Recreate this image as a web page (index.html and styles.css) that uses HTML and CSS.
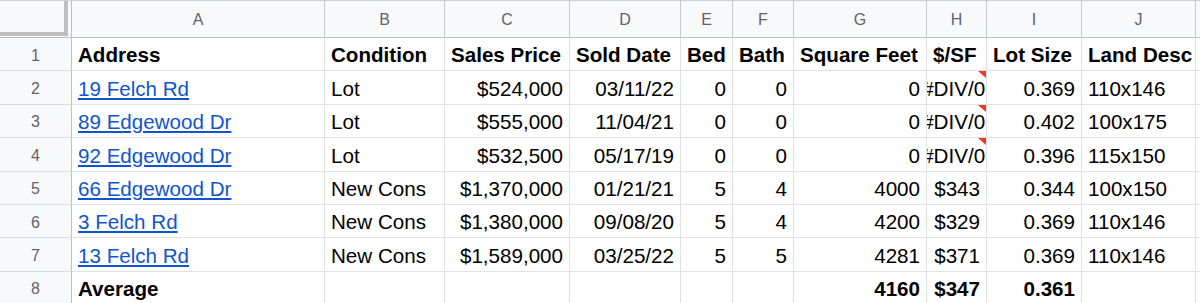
FILE: index.html
```html
<!DOCTYPE html>
<html>
<head>
<meta charset="utf-8">
<link rel="stylesheet" href="styles.css">
</head>
<body>
<div class="sheet">
  <div class="corner"><div class="freeze"></div></div>
  <div class="ch">A</div><div class="ch">B</div><div class="ch">C</div><div class="ch">D</div><div class="ch">E</div><div class="ch">F</div><div class="ch">G</div><div class="ch">H</div><div class="ch">I</div><div class="ch">J</div><div class="ch"></div>

  <div class="rh">1</div>
  <div class="c b">Address</div><div class="c b">Condition</div><div class="c b">Sales Price</div><div class="c b">Sold Date</div><div class="c b">Bed</div><div class="c b">Bath</div><div class="c b">Square Feet</div><div class="c b">$/SF</div><div class="c b">Lot Size</div><div class="c b">Land Desc</div><div class="c"></div>

  <div class="rh">2</div>
  <div class="c"><a class="lnk">19 Felch Rd</a></div><div class="c">Lot</div><div class="c r">$524,000</div><div class="c r">03/11/22</div><div class="c r">0</div><div class="c r">0</div><div class="c r">0</div><div class="c err">#DIV/0!</div><div class="c r">0.369</div><div class="c">110x146</div><div class="c"></div>

  <div class="rh">3</div>
  <div class="c"><a class="lnk">89 Edgewood Dr</a></div><div class="c">Lot</div><div class="c r">$555,000</div><div class="c r">11/04/21</div><div class="c r">0</div><div class="c r">0</div><div class="c r">0</div><div class="c err">#DIV/0!</div><div class="c r">0.402</div><div class="c">100x175</div><div class="c"></div>

  <div class="rh">4</div>
  <div class="c"><a class="lnk">92 Edgewood Dr</a></div><div class="c">Lot</div><div class="c r">$532,500</div><div class="c r">05/17/19</div><div class="c r">0</div><div class="c r">0</div><div class="c r">0</div><div class="c err">#DIV/0!</div><div class="c r">0.396</div><div class="c">115x150</div><div class="c"></div>

  <div class="rh">5</div>
  <div class="c"><a class="lnk">66 Edgewood Dr</a></div><div class="c">New Cons</div><div class="c r">$1,370,000</div><div class="c r">01/21/21</div><div class="c r">5</div><div class="c r">4</div><div class="c r">4000</div><div class="c r">$343</div><div class="c r">0.344</div><div class="c">100x150</div><div class="c"></div>

  <div class="rh">6</div>
  <div class="c"><a class="lnk">3 Felch Rd</a></div><div class="c">New Cons</div><div class="c r">$1,380,000</div><div class="c r">09/08/20</div><div class="c r">5</div><div class="c r">4</div><div class="c r">4200</div><div class="c r">$329</div><div class="c r">0.369</div><div class="c">110x146</div><div class="c"></div>

  <div class="rh">7</div>
  <div class="c"><a class="lnk">13 Felch Rd</a></div><div class="c">New Cons</div><div class="c r">$1,589,000</div><div class="c r">03/25/22</div><div class="c r">5</div><div class="c r">5</div><div class="c r">4281</div><div class="c r">$371</div><div class="c r">0.369</div><div class="c">110x146</div><div class="c"></div>

  <div class="rh">8</div>
  <div class="c b">Average</div><div class="c"></div><div class="c"></div><div class="c"></div><div class="c"></div><div class="c"></div><div class="c r b">4160</div><div class="c r b">$347</div><div class="c r b">0.361</div><div class="c"></div><div class="c"></div>
</div>
</body>
</html>
```

FILE: styles.css
```css
html, body {
  margin: 0;
  padding: 0;
  background: #ffffff;
  overflow: hidden;
}

.sheet {
  display: grid;
  grid-template-columns: 72px 253px 120px 125px 111px 52px 61px 133px 60px 95px 114px 1fr;
  grid-template-rows: 38px;
  grid-auto-rows: 33.4px;
  font-family: "Liberation Sans", Arial, sans-serif;
  font-size: 20.6px;
  color: #000000;
  width: 1200px;
}

.corner {
  background: #f8f9fa;
  border-right: 1px solid #c0c0c0;
  border-bottom: 1px solid #c0c0c0;
  border-top: 1px solid #d0d0d0;
  box-sizing: border-box;
}

.freeze {
  width: 64px;
  height: 31px;
  border-right: 4px solid #bfbfbf;
  border-bottom: 4px solid #bfbfbf;
}

.ch {
  background: #f8f9fa;
  border-top: 1px solid #d0d0d0;
  border-right: 1px solid #c7c7c7;
  border-bottom: 1px solid #c0c0c0;
  box-sizing: border-box;
  color: #5f6368;
  font-size: 16px;
  display: flex;
  align-items: center;
  justify-content: center;
  padding-top: 1px;
}

.rh {
  background: #f8f9fa;
  border-right: 1px solid #c0c0c0;
  border-bottom: 1px solid #dcdcdc;
  box-sizing: border-box;
  color: #5f6368;
  font-size: 16px;
  display: flex;
  align-items: center;
  justify-content: center;
  padding-top: 3px;
}

.c {
  position: relative;
  border-right: 1px solid #e2e2e2;
  border-bottom: 1px solid #e2e2e2;
  box-sizing: border-box;
  padding: 0 5px 3px 6px;
  display: flex;
  align-items: flex-end;
  overflow: hidden;
  white-space: nowrap;
}

.r {
  justify-content: flex-end;
  padding-right: 6px;
}

.b {
  font-weight: 700;
}

.lnk {
  color: #1155cc;
  text-decoration: underline;
  text-underline-offset: 2px;
}

.err {
  justify-content: center;
  padding-left: 0;
  padding-right: 0;
}

.err::after {
  content: "";
  position: absolute;
  top: 0;
  right: 0;
  width: 0;
  height: 0;
  border-left: 8px solid transparent;
  border-top: 7px solid #e8392c;
}
```
